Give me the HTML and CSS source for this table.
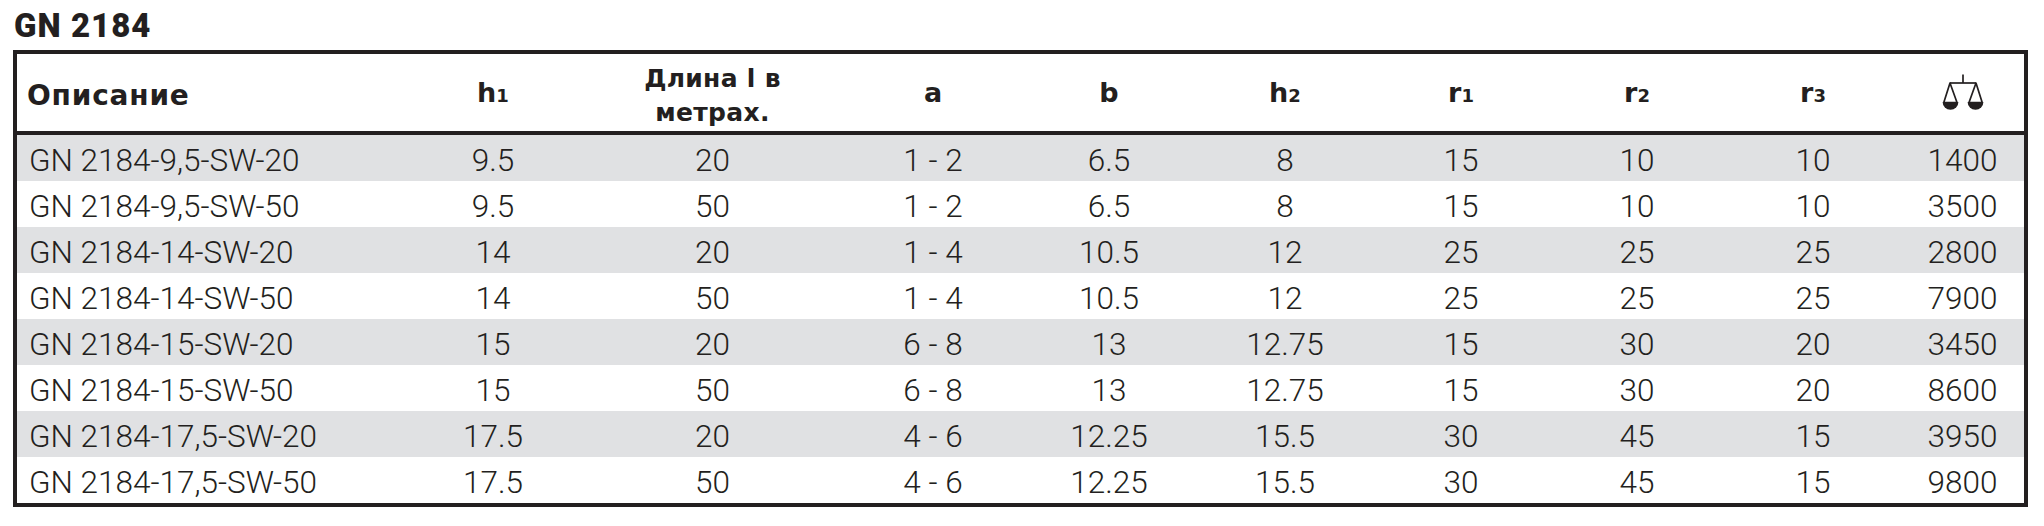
FILE: index.html
```html
<!DOCTYPE html>
<html lang="ru">
<head>
<meta charset="utf-8">
<title>GN 2184</title>
<link rel="stylesheet" href="styles.css">
</head>
<body>
<h1 class="title">GN 2184</h1>
<table class="spec">
  <colgroup>
    <col class="c-desc"><col class="c-h1"><col class="c-len">
    <col class="c-n"><col class="c-n"><col class="c-n"><col class="c-n"><col class="c-n"><col class="c-n">
    <col class="c-w">
  </colgroup>
  <thead>
    <tr>
      <th class="desc">Описание</th>
      <th class="sym">h<span class="sub">1</span></th>
      <th class="len">Длина l в<br>метрах.</th>
      <th class="sym">a</th>
      <th class="sym">b</th>
      <th class="sym">h<span class="sub">2</span></th>
      <th class="sym">r<span class="sub">1</span></th>
      <th class="sym">r<span class="sub">2</span></th>
      <th class="sym">r<span class="sub">3</span></th>
      <th class="wt"><svg class="scale" width="42" height="37" viewBox="0 0 42 37" aria-label="вес">
        <g fill="none" stroke="#231f20" stroke-width="1.7" stroke-linejoin="round">
          <line x1="21" y1="0.5" x2="21" y2="9"/>
          <line x1="8" y1="9" x2="34" y2="9"/>
          <path d="M8 9 L1.8 28.5 L15 28.5 Z"/>
          <path d="M34 9 L27 28.5 L40.2 28.5 Z"/>
        </g>
        <g fill="#231f20">
          <path d="M0.6 28 A7.9 7.8 0 0 0 16.4 28 Z"/>
          <path d="M25.6 28 A7.9 7.8 0 0 0 41.4 28 Z"/>
        </g>
      </svg></th>
    </tr>
  </thead>
  <tbody>
    <tr class="alt"><td class="desc">GN 2184-9,5-SW-20</td><td>9.5</td><td>20</td><td>1 - 2</td><td>6.5</td><td>8</td><td>15</td><td>10</td><td>10</td><td>1400</td></tr>
    <tr><td class="desc">GN 2184-9,5-SW-50</td><td>9.5</td><td>50</td><td>1 - 2</td><td>6.5</td><td>8</td><td>15</td><td>10</td><td>10</td><td>3500</td></tr>
    <tr class="alt"><td class="desc">GN 2184-14-SW-20</td><td>14</td><td>20</td><td>1 - 4</td><td>10.5</td><td>12</td><td>25</td><td>25</td><td>25</td><td>2800</td></tr>
    <tr><td class="desc">GN 2184-14-SW-50</td><td>14</td><td>50</td><td>1 - 4</td><td>10.5</td><td>12</td><td>25</td><td>25</td><td>25</td><td>7900</td></tr>
    <tr class="alt"><td class="desc">GN 2184-15-SW-20</td><td>15</td><td>20</td><td>6 - 8</td><td>13</td><td>12.75</td><td>15</td><td>30</td><td>20</td><td>3450</td></tr>
    <tr><td class="desc">GN 2184-15-SW-50</td><td>15</td><td>50</td><td>6 - 8</td><td>13</td><td>12.75</td><td>15</td><td>30</td><td>20</td><td>8600</td></tr>
    <tr class="alt"><td class="desc">GN 2184-17,5-SW-20</td><td>17.5</td><td>20</td><td>4 - 6</td><td>12.25</td><td>15.5</td><td>30</td><td>45</td><td>15</td><td>3950</td></tr>
    <tr><td class="desc">GN 2184-17,5-SW-50</td><td>17.5</td><td>50</td><td>4 - 6</td><td>12.25</td><td>15.5</td><td>30</td><td>45</td><td>15</td><td>9800</td></tr>
  </tbody>
</table>
</body>
</html>
```

FILE: styles.css
```css
html, body {
  margin: 0;
  padding: 0;
  background: #ffffff;
}

body {
  padding: 0 0 0 13px;
  color: #231f20;
  font-family: Roboto, "Liberation Sans", sans-serif;
}

.title {
  margin: 0 0 5px 0;
  padding: 8px 0 0 1px;
  height: 45px;
  box-sizing: border-box;
  font-size: 33px;
  line-height: 36px;
  font-weight: 900;
  letter-spacing: 1px;
}

.spec {
  border-collapse: separate;
  border-spacing: 0;
  table-layout: fixed;
  width: 2015px;
  border: 4px solid #231f20;
}

.c-desc { width: 389px; }
.c-h1 { width: 174px; }
.c-len { width: 265px; }
.c-n { width: 176px; }
.c-w { width: 123px; }

.spec th {
  box-sizing: border-box;
  height: 81px;
  padding: 22px 0 0 0;
  border-bottom: 4px solid #231f20;
  font-family: "DejaVu Sans", Roboto, sans-serif;
  font-weight: 700;
  font-size: 27px;
  line-height: 34px;
  text-align: center;
  vertical-align: top;
}

.spec th.desc {
  text-align: left;
  padding-left: 10px;
  padding-top: 25px;
  font-size: 28px;
  letter-spacing: 0.8px;
}

.spec th.len {
  font-size: 25px;
  padding-top: 8px;
  letter-spacing: 0.3px;
}

.sub {
  font-size: 18px;
}

.spec th.wt {
  padding-top: 20px;
}

.scale {
  display: block;
  margin: 0 auto;
}

.spec tbody tr.alt {
  background: #e0e1e3;
}

.spec td {
  box-sizing: border-box;
  height: 46px;
  padding: 6px 0 0 0;
  font-weight: 300;
  font-size: 31.5px;
  line-height: 40px;
  text-align: center;
  white-space: nowrap;
  color: #231f20;
}

.spec td.desc {
  text-align: left;
  padding-left: 12px;
}
```
